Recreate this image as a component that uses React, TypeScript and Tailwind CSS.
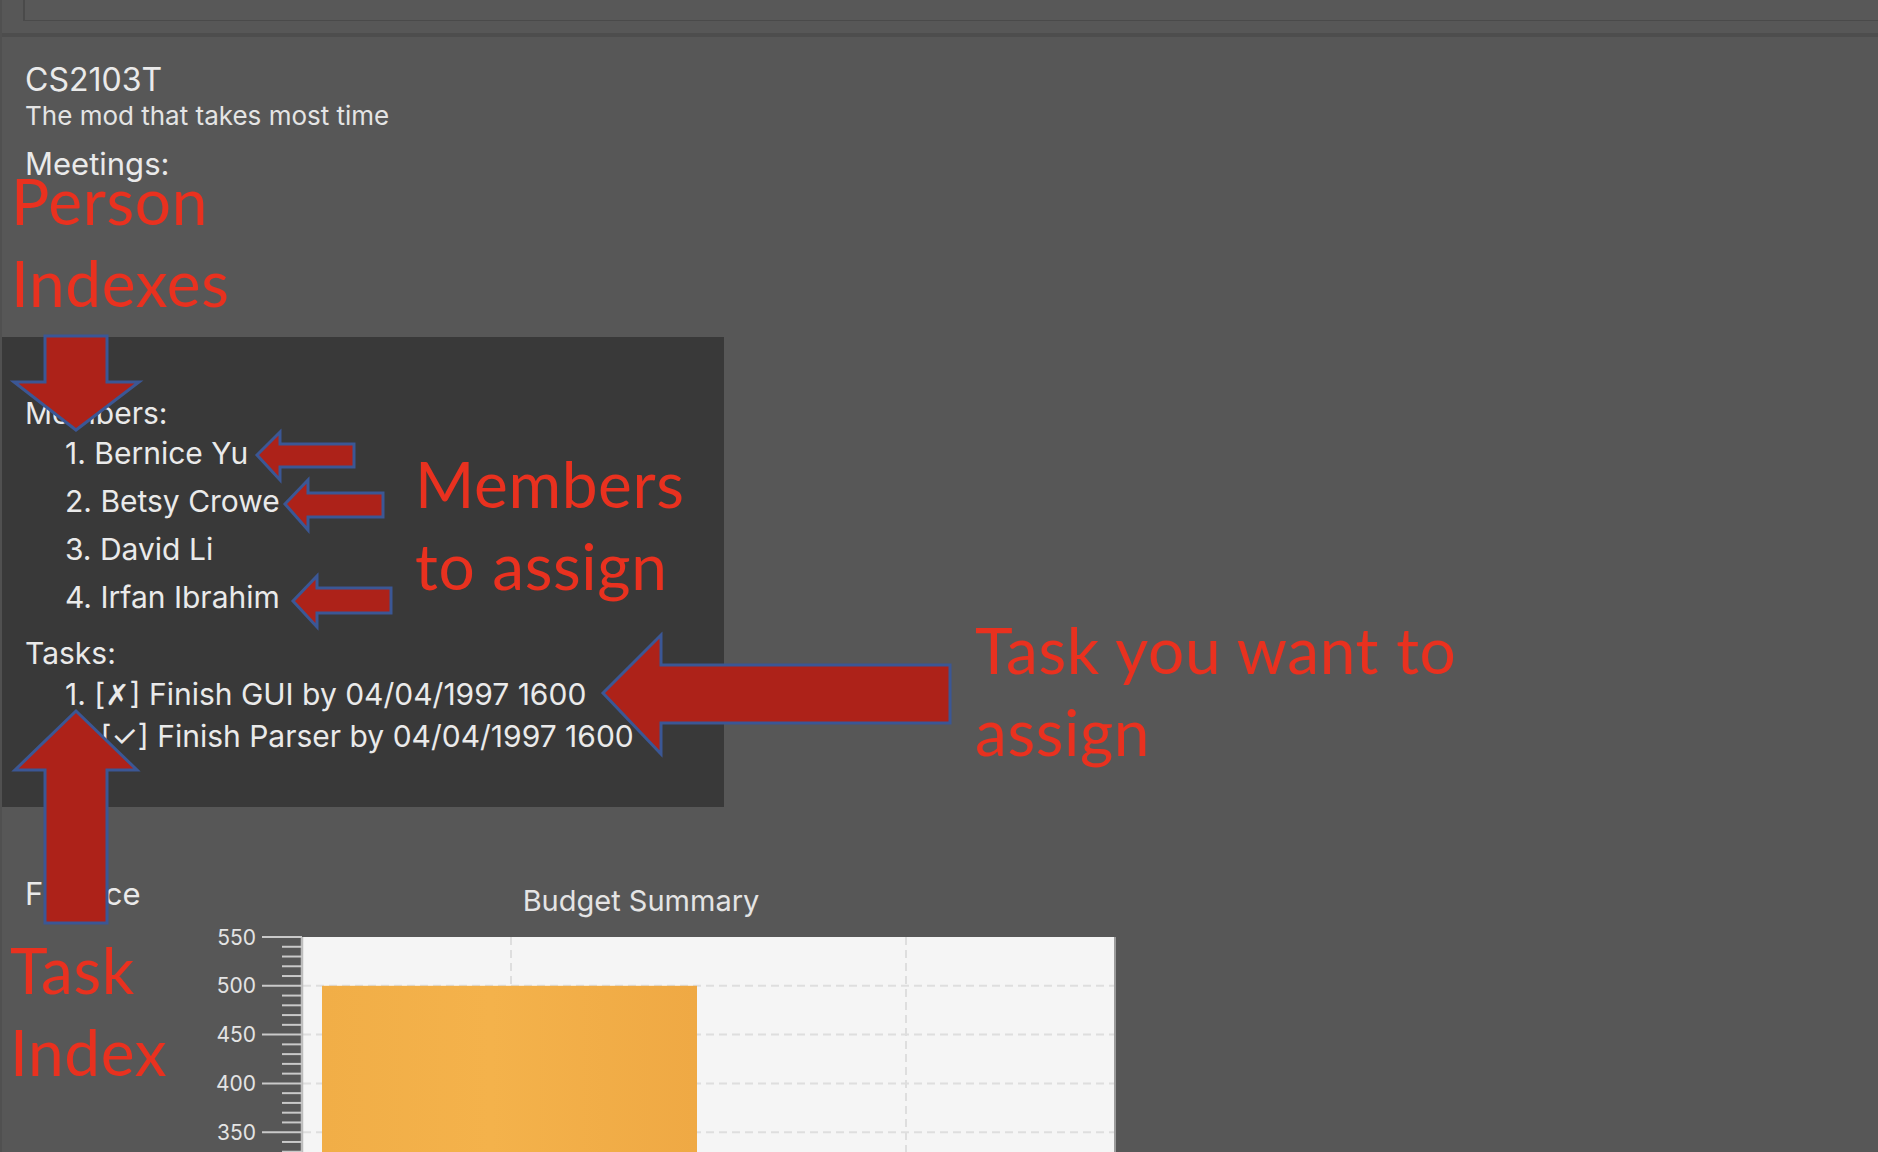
import React from "react";

const UI = "font-['Inter','DejaVu_Sans',sans-serif]";

function Chart() {
  const top = 12;
  const y = (v: number) => top + (550 - v) * 0.976;
  const majors = [550, 500, 450, 400, 350, 300];
  const minors: number[] = [];
  for (let v = 550; v >= 290; v -= 10) {
    if (v % 50 !== 0) minors.push(v);
  }
  return (
    <svg width="948" height="260" viewBox="0 0 948 260" className="block">
      <defs>
        <linearGradient id="barg" x1="0" x2="1" y1="0" y2="0">
          <stop offset="0" stopColor="#f1ae47" />
          <stop offset="0.45" stopColor="#f4b24b" />
          <stop offset="1" stopColor="#efa944" />
        </linearGradient>
      </defs>
      <rect x="133" y={top} width="811" height="300" fill="#f5f5f5" />
      {majors.slice(1).map((v) => (
        <line
          key={"h" + v}
          x1="133"
          x2="944"
          y1={y(v)}
          y2={y(v)}
          stroke="#dedede"
          strokeWidth="2"
          strokeDasharray="8 5"
        />
      ))}
      {[341, 736].map((x) => (
        <line
          key={"v" + x}
          x1={x}
          x2={x}
          y1={top}
          y2="260"
          stroke="#dedede"
          strokeWidth="2"
          strokeDasharray="8 5"
        />
      ))}
      <rect x="152" y={y(500)} width="375" height="300" fill="url(#barg)" />
      <line x1="132" x2="132" y1={top} y2="260" stroke="#bdbdbd" strokeWidth="2.5" />
      <line x1="945" x2="945" y1={top} y2="260" stroke="#9c9c9c" strokeWidth="2" />
      {majors.map((v) => (
        <line key={"mt" + v} x1="92" x2="132" y1={y(v)} y2={y(v)} stroke="#c9c9c9" strokeWidth="2" />
      ))}
      {minors.map((v) => (
        <line key={"mn" + v} x1="112" x2="132" y1={y(v)} y2={y(v)} stroke="#c9c9c9" strokeWidth="2" />
      ))}
      {majors.map((v) => (
        <text
          key={"l" + v}
          x="86"
          y={y(v) + 7.5}
          textAnchor="end"
          fontSize="21"
          fill="#e4e4e4"
          fontFamily="Inter, 'DejaVu Sans', sans-serif"
        >
          {v}
        </text>
      ))}
    </svg>
  );
}

const arrowPolys = [
  // down arrow (Person Indexes)
  "43,336 105,336 105,382 137,382 74,430 12,382 43,382",
  // Bernice
  "255,455 278,432 278,444 352,444 352,467 278,467 278,480",
  // Betsy
  "283,504 306,480 306,493 381,493 381,517 306,517 306,530",
  // Irfan
  "291,601 315,576 315,588 389,588 389,613 315,613 315,627",
  // big task arrow
  "601,693 659,635 659,665 948,665 948,723 659,723 659,754",
  // up arrow (Task Index)
  "74,711 135,770 105,770 105,923 43,923 43,770 13,770",
];

function Annotation({ left, top, lines }: { left: number; top: number; lines: string[] }) {
  return (
    <div
      className="absolute font-['Lato',sans-serif] text-[64px] leading-[82px] tracking-[0.6px] text-[#e9311f] whitespace-nowrap"
      style={{ left, top }}
    >
      {lines.map((l) => (
        <div key={l}>{l}</div>
      ))}
    </div>
  );
}

export default function App() {
  return (
    <div className={`relative w-[1878px] h-[1152px] overflow-hidden bg-[#575757] text-[#eaeaea] border-l-2 border-[#505050] ${UI}`}>
      {/* top command box */}
      <div className="h-[21px] ml-[21px] border-l-2 border-b border-[#4a4a4a] bg-[#585858]" />
      <div className="h-[12px]" />
      <div className="h-[4px] bg-[#4d4d4d]" />

      {/* header */}
      <div className="pl-[23px]">
        <div className="mt-[25px] text-[32px] leading-[36px]">CS2103T</div>
        <div className="mt-[4px] text-[26px] leading-[28px] text-[#e4e4e4]">The mod that takes most time</div>
        <div className="mt-[17px] text-[31px] leading-[34px]">Meetings:</div>
      </div>

      {/* dark panel */}
      <div className="mt-[156px] w-[722px] h-[470px] bg-[#393939] pl-[23px] pt-[59px]">
        <div className="text-[30px] leading-[34px]">Members:</div>
        <div className="mt-[-1px] pl-[40px] text-[30px] leading-[48px]">
          <div>1. Bernice Yu</div>
          <div>2. Betsy Crowe</div>
          <div>3. David Li</div>
          <div>4. Irfan Ibrahim</div>
        </div>
        <div className="mt-[15px] text-[30px] leading-[34px]">Tasks:</div>
        <div className="mt-[3px] pl-[40px] text-[30px] leading-[42px] whitespace-nowrap">
          <div className="h-[42px]">
            1. [<span className="font-['DejaVu_Sans',sans-serif] font-bold text-[29px] leading-[0px]">✗</span>] Finish GUI by 04/04/1997 1600
          </div>
          <div className="h-[42px]">2. [✓] Finish Parser by 04/04/1997 1600</div>
        </div>
      </div>

      {/* finance row */}
      <div className="mt-[70px] flex pl-[23px]">
        <div className="w-[145px] shrink-0 text-[31px] leading-[34px]">Finance</div>
        <div className="w-[948px] shrink-0">
          <div className="mt-[8px] pr-[6px] text-center text-[29px] leading-[32px] text-[#e4e4e4]">Budget Summary</div>
          <div className="mt-[8px]">
            <Chart />
          </div>
        </div>
      </div>

      {/* annotations overlay */}
      <svg className="absolute left-0 top-0 pointer-events-none" width="1878" height="1152" viewBox="0 0 1878 1152">
        {arrowPolys.map((p) => (
          <polygon key={p} points={p} fill="#ad2219" stroke="#3b5795" strokeWidth="3" strokeLinejoin="miter" />
        ))}
      </svg>
      <Annotation left={9} top={160} lines={["Person", "Indexes"]} />
      <Annotation left={413} top={443} lines={["Members", "to assign"]} />
      <Annotation left={973} top={609} lines={["Task you want to", "assign"]} />
      <Annotation left={8} top={929} lines={["Task", "Index"]} />
    </div>
  );
}
